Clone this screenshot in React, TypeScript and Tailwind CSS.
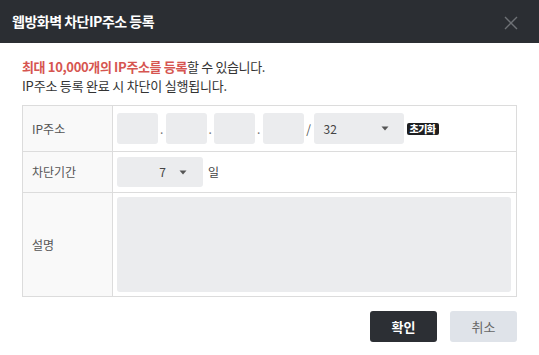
import React from "react";

const Caret = () => (
  <svg width="8" height="5" viewBox="0 0 8 5" className="shrink-0">
    <path d="M0.5 0.5 L7.5 0.5 L4 4.5 Z" fill="#555" />
  </svg>
);

const IpBox = () => <div className="w-[41px] h-[31px] rounded-[3px] bg-[#ebecee] shrink-0" />;
const Dot = () => (
  <span className="w-[7.5px] text-center text-[12px] text-[#777] leading-[31px] shrink-0">.</span>
);

export default function App() {
  return (
    <div
      className="w-[539px] h-[355px] bg-white overflow-hidden"
      style={{ fontFamily: '"Noto Sans CJK KR", "Noto Sans", sans-serif' }}
    >
      <div className="h-[43px] bg-[#2b2e33] flex items-center justify-between pl-[12px] pr-[21px]">
        <div className="text-[14px] font-bold text-white tracking-[-0.5px]">웹방화벽 차단IP주소 등록</div>
        <svg width="14" height="14" viewBox="0 0 14 14" className="mt-[2px]">
          <path d="M1 1 L13 13 M13 1 L1 13" stroke="#6e7176" strokeWidth="1.4" />
        </svg>
      </div>
      <div className="px-[22px] pt-[14px]">
        <div className="text-[13px] leading-[19px] text-[#333] tracking-[-0.35px]">
          <span className="text-[#d65550] font-bold">최대 10,000개의 IP주소를 등록</span>할 수 있습니다.
        </div>
        <div className="text-[13px] leading-[19px] text-[#333] tracking-[-0.2px]">IP주소 등록 완료 시 차단이 실행됩니다.</div>

        <div className="mt-[10px] border border-[#dcdcdc]">
          <div className="flex">
            <div className="w-[90px] bg-[#f9f9f9] border-r border-[#dcdcdc] flex items-center pl-[9px] text-[12px] text-[#555]">
              IP주소
            </div>
            <div className="flex items-center py-[7px] pl-[4px]">
              <IpBox />
              <Dot />
              <IpBox />
              <Dot />
              <IpBox />
              <Dot />
              <IpBox />
              <span className="w-[10px] text-center text-[12px] text-[#555] shrink-0">/</span>
              <div className="w-[90px] h-[31px] rounded-[3px] bg-[#ebecee] flex items-center justify-between pl-[10px] pr-[15px] text-[12px] text-[#444]">
                <span>32</span>
                <Caret />
              </div>
              <div className="ml-[3px] h-[12px] w-[32px] rounded-[2px] bg-[#1e1f21] text-white text-[10px] font-extrabold flex items-center justify-center leading-none tracking-[-0.5px]">
                초기화
              </div>
            </div>
          </div>
          <div className="flex border-t border-[#dcdcdc]">
            <div className="w-[90px] bg-[#f9f9f9] border-r border-[#dcdcdc] flex items-center pl-[9px] text-[12px] text-[#555]">
              차단기간
            </div>
            <div className="flex items-center py-[5px] pl-[4px]">
              <div className="w-[86px] h-[30px] rounded-[3px] bg-[#ebecee] flex items-center justify-end pr-[16px] text-[12px] text-[#444]">
                <span className="mr-[13px]">7</span>
                <Caret />
              </div>
              <span className="ml-[5px] text-[12px] text-[#444]">일</span>
            </div>
          </div>
          <div className="flex border-t border-[#dcdcdc]">
            <div className="w-[90px] bg-[#f9f9f9] border-r border-[#dcdcdc] flex items-center pl-[9px] text-[12px] text-[#555]">
              설명
            </div>
            <div className="flex-1 py-[4px] pl-[4px] pr-[5px]">
              <div className="h-[95px] rounded-[3px] bg-[#ebecee]" />
            </div>
          </div>
        </div>

        <div className="mt-[14px] flex justify-end gap-[13px]">
          <button className="w-[67px] h-[31px] rounded-[3px] bg-[#2c2f34] text-white text-[13px] font-bold">확인</button>
          <button className="w-[67px] h-[31px] rounded-[3px] bg-[#dfe3e9] text-[#666] text-[13px]">취소</button>
        </div>
      </div>
    </div>
  );
}
